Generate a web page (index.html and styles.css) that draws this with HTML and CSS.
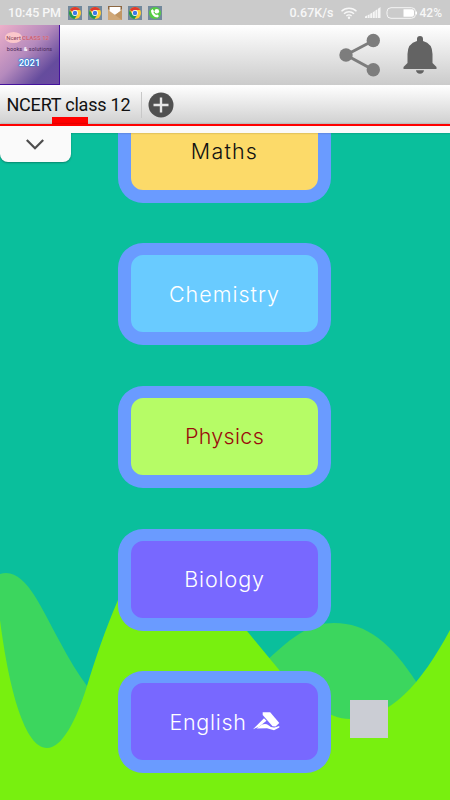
FILE: index.html
```
<!DOCTYPE html>
<html lang="en">
<head>
    <meta charset="UTF-8">
    <meta name="viewport" content="width=device-width, initial-scale=1.0">
    <title>NCERT class 12</title>
    <link rel="stylesheet" href="styles.css">
</head>
<body>
    <svg class="defs" width="0" height="0">
        <symbol id="chrome" viewBox="0 0 14 14">
            <rect width="14" height="14" fill="#71889b"/>
            <circle cx="7" cy="7" r="6" fill="#fc3"/>
            <path d="M7 7 1.8 4A6 6 0 0 1 12.2 4H7z" fill="#df3b2f"/>
            <path d="M1.8 4A6 6 0 0 0 6.5 13L9.5 8.5 7 7 4.4 8.5z" fill="#219653"/>
            <circle cx="7" cy="7" r="2.9" fill="#fff"/>
            <circle cx="7" cy="7" r="2.2" fill="#3b78e7"/>
        </symbol>
    </svg>

    <div class="status">
        <span class="time">10:45 PM</span>
        <div class="notifications">
            <svg width="14" height="14"><use href="#chrome"/></svg>
            <svg width="14" height="14"><use href="#chrome"/></svg>
            <svg width="14" height="14" viewBox="0 0 14 14">
                <rect width="14" height="14" fill="#d0a878"/>
                <path d="M0 0h14v3L7 9 0 3z" fill="#8c6742"/>
                <path d="M1.500 1h11v4L7 9 1.500 5z" fill="#fff"/>
                <path d="M7 9l7-5v10z" fill="#c19663"/>
            </svg>
            <svg width="14" height="14"><use href="#chrome"/></svg>
            <svg width="14" height="14" viewBox="0 0 14 14">
                <rect width="14" height="14" fill="#71889b"/>
                <circle cx="7" cy="7" r="6" fill="#5c4"/>
                <path d="M3 4.500 4.500 3 6 5 5.500 6.500 8 9l1.500-.5L11 10 9.500 11.500C6 11.500 3 8 3 4.500z" fill="#fff"/>
                <circle cx="8.800" cy="5.200" r="2.300" fill="#fff"/>
            </svg>
        </div>
        <div class="signals">
            <span class="speed">0.67K/s</span>
            <svg class="wifi" width="16" height="12" viewBox="0 0 16 12" fill="none" stroke="#f7f7f7" stroke-width="1.400">
                <path d="M.5 4.300a10.600 10.600 0 0 1 15 0M3 6.800a7 7 0 0 1 10 0M5.400 9.100a3.700 3.700 0 0 1 5.200 0"/>
                <circle cx="8" cy="10.700" r="1.200" fill="#f7f7f7" stroke="none"/>
            </svg>
            <svg class="bars" width="16" height="11" viewBox="0 0 16 11" fill="#f5f5f5">
                <path d="M0 11V9.500L2 8.500V11zM2.600 11V8.200l2-1V11zM5.200 11V6.800l2-1V11zM7.800 11V5.200l2-1.200V11zM10.400 11V3.500l2-1.300V11zM13 11V1.800L15.500 0v11z"/>
            </svg>
            <svg class="battery" width="31" height="12" viewBox="0 0 31 12">
                <rect x="1" y=".7" width="28.500" height="10.600" rx="4" fill="none" stroke="#f5f5f5"/>
                <path d="M17.500 2.300H26q2 0 2 2v3.400q0 2-2 2h-8.500z" fill="#fff"/>
                <path d="M30.500 4.500v3" stroke="#fff"/>
            </svg>
            <span class="percent">42%</span>
        </div>
    </div>

    <header class="header">
        <div class="logo">
            <div class="logo-title"><span class="logo-badge">Ncert</span><span class="logo-class">CLASS 12</span></div>
            <div class="logo-books">books <b>&amp;</b> solutions</div>
            <div class="logo-year">2021</div>
        </div>
        <div class="actions">
            <svg width="42" height="44" viewBox="0 0 42 44" fill="#7d7d7d">
                <path d="M34.500 7.500 7 22l27.500 15" fill="none" stroke="#7d7d7d" stroke-width="3"/>
                <circle cx="34.300" cy="7.500" r="6.700"/>
                <circle cx="7" cy="22" r="6.700"/>
                <circle cx="34.300" cy="36.800" r="6.700"/>
            </svg>
            <svg class="bell" width="34" height="38" viewBox="0 0 34 38" fill="#636363">
                <path d="M14 5V3q0-3 3-3t3 3v2q9.500 2.500 9.500 13v9l4 4v2H.5v-2l4-4v-9Q4.500 7.500 14 5z"/>
                <path d="M13 34.300h8q-.5 3.400-4 3.400t-4-3.400z"/>
            </svg>
        </div>
    </header>

    <nav class="tabs">
        <span class="tab">NCERT class 12</span>
        <svg class="add" width="26" height="26" viewBox="0 0 26 26">
            <circle cx="13" cy="13" r="12.500" fill="#505050"/>
            <path d="M13 5.500v15M5.500 13h15" stroke="#e6e6e6" stroke-width="2.400"/>
        </svg>
    </nav>
    <div class="strip">
        <div class="pulldown">
            <svg width="18" height="11" viewBox="0 0 18 11" fill="none" stroke="#4d4d4d" stroke-width="2.200">
                <path d="M.8 1 9 9.200 17.200 1"/>
            </svg>
        </div>
    </div>

    <main class="content">
        <!-- hills -->
        <svg class="hills" width="450" height="667" viewBox="0 133 450 667">
            <path d="M0 574C25 566 41 608 60 642Q73 667 87 686L110 800H0z" fill="#3cd65e"/>
            <path d="M230 700C283 640 307 623 334 623C367 623 391 643 417 683L440 760H230z" fill="#3cd65e"/>
            <path d="M0 620C9 690 25 748 47 748C62 748 76 721 87 686C95 660 105 630 118 600C137 554 152 540 172 540C197 540 224 603 247 631L280 671C304 701 329 719 350 719C390 719 421 684 450 630V800H0z" fill="#78f00f"/>
        </svg>
        <div class="cards">
            <a class="card maths"><span>Maths</span></a>
            <a class="card chemistry"><span>Chemistry</span></a>
            <a class="card physics"><span>Physics</span></a>
            <a class="card biology"><span>Biology</span></a>
            <a class="card english"><span>English</span>
                <svg width="27" height="19" viewBox="0 0 27 19" fill="#fff">
                    <path d="M9.700.3h7.500L26.300 11 22.500 14.500 19.500 14.300 9.700 3z"/>
                    <path d="M0 17.200 11 6.300l2.500 2.500L6 14.800z"/>
                    <path d="M3.500 16.500 9 12.500q4-1.500 6.500.8 2.500 2.500 6 2.200l4.800-1.500v1.500L21 18.300l-7-2z"/>
                </svg>
            </a>
        </div>
        <div class="box"></div>
    </main>
</body>
</html>
```
FILE: styles.css
```
body {
    margin: 0;
    width: 450px;
    height: 800px;
    overflow: hidden;
    display: flex;
    flex-direction: column;
    font-family: Roboto, sans-serif;
    background-color: #0abf9c;
}

.defs {
    position: absolute;
}

.status {
    height: 25px;
    flex: none;
    display: flex;
    align-items: center;
    box-sizing: border-box;
    padding: 0 8px;
    background-color: #cbcbcb;
    color: #f7f7f7;
    font-size: 12.5px;
    font-weight: 500;
    white-space: nowrap;
}

.time {
    width: 60px;
    letter-spacing: -0.1px;
}

.notifications {
    display: flex;
    gap: 6px;
}

.signals {
    display: flex;
    align-items: center;
    margin-left: auto;
}

.wifi {
    margin-left: 7px;
}

.bars {
    margin-left: 8px;
}

.battery {
    margin: 0 3px 0 5px;
}

.percent {
    font-size: 12px;
}

.header {
    height: 60px;
    flex: none;
    display: flex;
    justify-content: space-between;
    background: linear-gradient(#fff, #cbcbcb);
}

.logo {
    width: 60px;
    height: 60px;
    box-sizing: border-box;
    padding-top: 6px;
    border-right: 1px solid #43119c;
    border-bottom: 1px solid #43119c;
    background: linear-gradient(135deg, #edb0c9, #b58abd 45%, #654c9d 78%, #6c4aa1);
    text-align: center;
    white-space: nowrap;
}

.logo-title {
    display: flex;
    align-items: center;
    padding-left: 5px;
    height: 12px;
    font-size: 6px;
}

.logo-badge {
    width: 17px;
    line-height: 11px;
    border-radius: 50%;
    background-color: #fbc7cb;
    color: #8a4560;
}

.logo-class {
    color: #c7617b;
    font-weight: bold;
    text-shadow: 0 0 1px #f5b1b1;
}

.logo-books {
    height: 12px;
    line-height: 13px;
    font-size: 5.5px;
    letter-spacing: 0.1px;
    color: #4a2858;
}

.logo-books b {
    color: #fff;
}

.logo-year {
    line-height: 16px;
    font-size: 9.5px;
    font-weight: 500;
    color: #fff;
    text-shadow: 0 0 1px #087ce0, 0 0 1px #087ce0, 0 0 2px #087ce0;
}

.actions {
    display: flex;
    align-items: center;
    gap: 22px;
    padding-right: 13px;
}

.tabs {
    height: 39px;
    flex: none;
    display: flex;
    align-items: center;
    box-sizing: border-box;
    padding-left: 6.5px;
    background: linear-gradient(#fff, #d0d0d0);
}

.tab {
    position: relative;
    width: 134px;
    line-height: 26px;
    border-right: 1px solid #c8c8c8;
    font-size: 18px;
    letter-spacing: -0.22px;
    color: #111;
    white-space: nowrap;
}

/* marker of the selected tab */
.tab::after {
    content: "";
    position: absolute;
    left: 45.5px;
    bottom: -7px;
    width: 36px;
    height: 8px;
    background-color: #f00;
}

.add {
    margin-left: 6px;
}

.strip {
    position: relative;
    z-index: 2;
    height: 9px;
    flex: none;
    box-sizing: border-box;
    border-top: 2px solid #f00;
    background-color: #fafafa;
    box-shadow: 0 0 2px rgba(0, 0, 0, 0.3);
}

.pulldown {
    position: absolute;
    left: 0;
    top: 0;
    width: 71px;
    height: 36px;
    box-sizing: border-box;
    padding: 13px 0 0 26px;
    line-height: 0;
    border-radius: 0 0 8px 8px;
    background-color: #fafafa;
    box-shadow: 0 1px 2px rgba(0, 0, 0, 0.3);
    clip-path: inset(7px -4px -4px 0);
}

.content {
    position: relative;
    height: 667px;
    flex: none;
    overflow: hidden;
}

.hills {
    position: absolute;
    left: 0;
    top: 0;
}

.cards {
    position: relative;
    width: 213px;
    margin: -32.4px 0 0 118px;
    display: flex;
    flex-direction: column;
    gap: 40.7px;
}

.card {
    height: 102px;
    box-sizing: border-box;
    display: flex;
    align-items: center;
    justify-content: center;
    gap: 6px;
    border: 13px solid #6a9bff;
    border-top-width: 12px;
    border-radius: 25px;
    font-family: Inter, sans-serif;
    font-size: 21.5px;
    font-weight: 300;
    letter-spacing: 0.7px;
    color: #fff;
    background-color: #7868ff;
}

.maths {
    background-color: #fcda69;
    color: #111;
    letter-spacing: 1.2px;
}

.chemistry {
    background-color: #69cbff;
    letter-spacing: 1px;
}

.physics {
    background-color: #b6fc66;
    color: #9b0b0b;
    letter-spacing: 0.3px;
}

.biology {
    letter-spacing: 0.9px;
}

.box {
    position: absolute;
    left: 350px;
    top: 567px;
    width: 38px;
    height: 38px;
    background-color: #cbcdd4;
}
```
